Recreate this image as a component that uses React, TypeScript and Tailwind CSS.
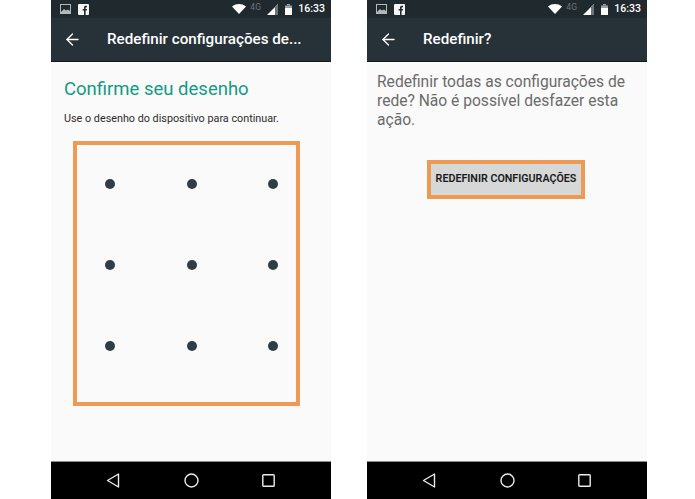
import React from 'react';
import { ArrowLeft } from 'lucide-react';

function StatusBar() {
    return (
        <div className="h-[18px] bg-[#20292e] flex items-center pl-[9px] pr-[6px] shrink-0">
            <svg width="11" height="10" viewBox="0 0 11 10" className="opacity-80">
                <rect x="0.5" y="0.5" width="10" height="9" fill="none" stroke="#d8dcdd" strokeWidth="1" />
                <path d="M1 8 L4 5 L6 6.5 L8 5.5 L10 7 V9 H1 Z" fill="#d8dcdd" />
            </svg>
            <div className="w-[11px] h-[11px] bg-[#f4f4f4] ml-[7px] relative overflow-hidden rounded-[1px]">
                <svg width="11" height="11" viewBox="0 0 11 11" className="absolute inset-0">
                    <path d="M6 11 V6.6 H4.6 V5 H6 V3.6 C6 2.4 6.8 1.8 7.8 1.8 H9 V3.3 H8.2 C7.8 3.3 7.6 3.5 7.6 3.9 V5 H9 L8.8 6.6 H7.6 V11 Z" fill="#20292e" />
                </svg>
            </div>
            <div className="flex-1" />
            <svg width="14" height="10" viewBox="0 0 14 10">
                <path d="M0 2.5 C4 -0.8 10 -0.8 14 2.5 L7 10 Z" fill="#ffffff" />
            </svg>
            <span className="text-[8.5px] leading-none text-[#6d7477] ml-[4px] mb-[4px] w-[12px]">4G</span>
            <svg width="11" height="11" viewBox="0 0 11 11" className="ml-[5px]">
                <path d="M0 11 L11 0 V11 Z" fill="#ffffff" />
                <path d="M8 3 L11 0 V11 H8 Z" fill="#6d7477" />
            </svg>
            <svg width="7" height="11" viewBox="0 0 7 11" className="ml-[7px]">
                <rect x="2" y="0" width="3" height="1.5" fill="#9aa0a3" />
                <rect x="0" y="1.5" width="7" height="2.5" fill="#9aa0a3" />
                <rect x="0" y="4" width="7" height="7" fill="#ffffff" />
            </svg>
            <span className="text-[10.5px] leading-none text-white font-medium ml-[6px]">16:33</span>
        </div>
    );
}

function Toolbar({ title }: { title: string }) {
    return (
        <div className="h-[44px] bg-[#263238] flex items-center shrink-0 border-b border-[#15191c]">
            <ArrowLeft size={19} color="#ffffff" strokeWidth={1.6} className="ml-[12px]" />
            <span className="ml-[25px] text-[15.2px] text-white font-medium whitespace-nowrap">{title}</span>
        </div>
    );
}

function NavBar() {
    return (
        <div className="h-[38px] bg-black flex items-center shrink-0 border-t border-[#8a8a8a]">
            <svg width="14" height="15" viewBox="0 0 14 15" className="ml-[55px]">
                <path d="M12.5 1 V14 L1.5 7.5 Z" fill="none" stroke="#ececec" strokeWidth="1.4" strokeLinejoin="round" />
            </svg>
            <svg width="15" height="15" viewBox="0 0 15 15" className="ml-[64px]">
                <circle cx="7.5" cy="7.5" r="6.5" fill="none" stroke="#ececec" strokeWidth="1.4" />
            </svg>
            <svg width="13" height="13" viewBox="0 0 13 13" className="ml-[63px]">
                <rect x="0.8" y="0.8" width="11.4" height="11.4" rx="0.8" fill="none" stroke="#ececec" strokeWidth="1.4" />
            </svg>
        </div>
    );
}

function Phone({ title, children }: { title: string, children: React.ReactNode }) {
    return (
        <div className="w-[280px] h-[499px] flex flex-col">
            <StatusBar />
            <Toolbar title={title} />
            <div className="flex-1 bg-[#fafafa] flex flex-col overflow-hidden">{children}</div>
            <NavBar />
        </div>
    );
}

export default function App() {
    const dots = [0, 1, 2, 3, 4, 5, 6, 7, 8];

    return (
        <div className="w-[695px] h-[499px] bg-white flex pl-[51px] gap-[36px] overflow-hidden font-['Roboto',sans-serif]">
            <Phone title="Redefinir configurações de...">
                <h1 className="ml-[13px] mt-[15px] text-[18.5px] leading-[24px] text-[#129a84]">Confirme seu desenho</h1>
                <p className="ml-[13px] mt-[11px] text-[10.8px] leading-[14px] text-[#2c2c2c]">Use o desenho do dispositivo para continuar.</p>
                {/* pattern grid with the orange marker frame */}
                <div className="ml-[22px] mt-[15px] w-[227px] h-[265px] border-4 border-[#ee9a55] grid grid-cols-[10px_10px_10px] grid-rows-[10px_10px_10px] justify-between content-between pl-[28px] pr-[18px] pt-[34px] pb-[51px]">
                    {dots.map((d) => (
                        <div key={d} className="w-[10px] h-[10px] rounded-full bg-[#2f3e46]" />
                    ))}
                </div>
            </Phone>
            <Phone title="Redefinir?">
                <p className="ml-[10px] mt-[11px] w-[265px] text-[15.6px] leading-[19px] text-[#6b6b6b]">
                    Redefinir todas as configurações de rede? Não é possível desfazer esta ação.
                </p>
                <div className="ml-[60px] mt-[30px] w-[158px] h-[39px] border-4 border-[#ee9a55] bg-[#d6d7d7] flex items-center justify-center">
                    <span className="text-[10.7px] font-semibold text-[#1a1a1a] whitespace-nowrap">REDEFINIR CONFIGURAÇÕES</span>
                </div>
            </Phone>
        </div>
    );
}
